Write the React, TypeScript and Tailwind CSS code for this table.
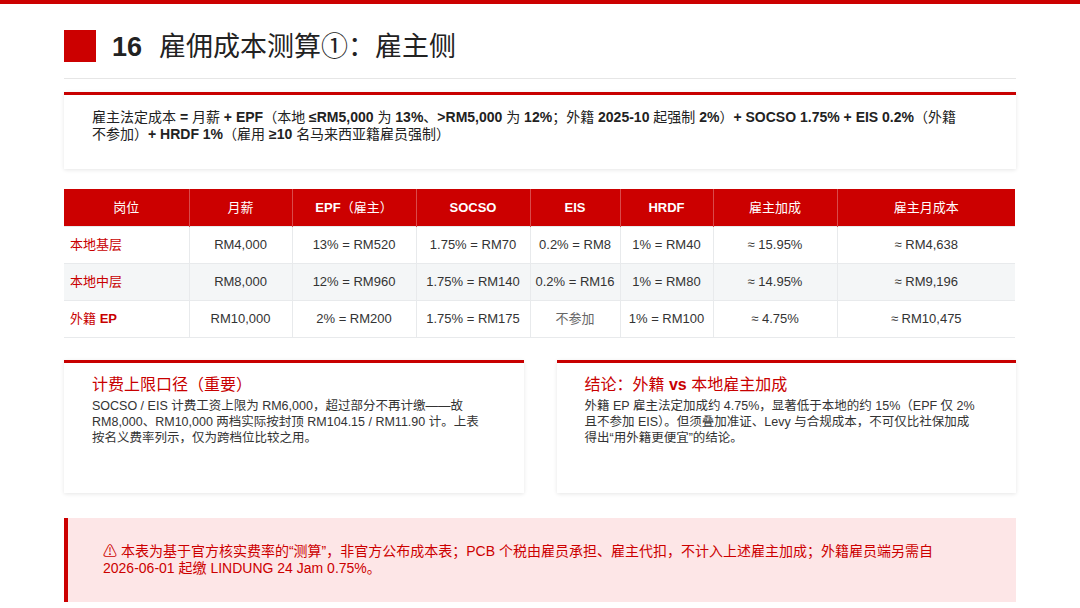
import type { ReactNode } from 'react';

const FONT = "font-['Liberation_Sans','Noto_Sans_CJK_SC',sans-serif]";

// Latin runs keep the weight of the parent, CJK runs are set regular
function Mixed({ text }: { text: string }) {
  const parts = text.split(/([\u3000-\u9fff\uff00-\uffef]+)/);
  return (
    <>
      {parts.map((p, i) =>
        /[\u3000-\u9fff\uff00-\uffef]/.test(p) ? (
          <span key={i} className="font-normal">
            {p}
          </span>
        ) : (
          <span key={i}>{p}</span>
        )
      )}
    </>
  );
}

const widths = ['w-[125px]', 'w-[103px]', 'w-[124px]', 'w-[114px]', 'w-[90px]', 'w-[93px]', 'w-[124px]', 'w-[178px]'];

const headers = ['岗位', '月薪', 'EPF（雇主）', 'SOCSO', 'EIS', 'HRDF', '雇主加成', '雇主月成本'];

const rows = [
  ['本地基层', 'RM4,000', '13% = RM520', '1.75% = RM70', '0.2% = RM8', '1% = RM40', '≈ 15.95%', '≈ RM4,638'],
  ['本地中层', 'RM8,000', '12% = RM960', '1.75% = RM140', '0.2% = RM16', '1% = RM80', '≈ 14.95%', '≈ RM9,196'],
  ['外籍 EP', 'RM10,000', '2% = RM200', '1.75% = RM175', '不参加', '1% = RM100', '≈ 4.75%', '≈ RM10,475'],
];

function Card({ title, children }: { title: string; children: ReactNode }) {
  return (
    <div className="flex-1 h-[133px] bg-white border-t-[3px] border-[#c80000] shadow-[0_1px_4px_rgba(0,0,0,0.10)] pl-7 pr-9 pt-[12px]">
      <div className="text-[16px] font-bold text-[#c80000] leading-[20px]">
        <Mixed text={title} />
      </div>
      <div className="mt-[3px] text-[12.5px] text-[#333] leading-[16px]">{children}</div>
    </div>
  );
}

export default function App() {
  return (
    <div className={`w-[1080px] h-[608px] bg-white overflow-hidden ${FONT}`}>
      <div className="h-1 bg-[#cc0000]" />

      <div className="px-16">
        <div className="flex items-center mt-[26px] h-8">
          <div className="w-8 h-8 bg-[#cc0000]" />
          <h1 className="ml-4 flex items-baseline gap-[17px] text-[27px] text-[#222] mt-[3px]">
            <span className="font-bold">16</span>
            <span>雇佣成本测算①：雇主侧</span>
          </h1>
        </div>
        <div className="mt-[16px] h-px bg-[#e6e6e6]" />

        <div className="mt-[13px] h-[77px] bg-white border-t-[3px] border-[#c80000] shadow-[0_1px_4px_rgba(0,0,0,0.10)] pl-7 pr-12 pt-[14px] text-[14px] leading-[17px] text-[#222] font-bold">
          <Mixed text="雇主法定成本 = 月薪 + EPF（本地 ≤RM5,000 为 13%、>RM5,000 为 12%；外籍 2025-10 起强制 2%）+ SOCSO 1.75% + EIS 0.2%（外籍不参加）+ HRDF 1%（雇用 ≥10 名马来西亚籍雇员强制）" />
        </div>

        <table className="mt-5 border-collapse text-[13px] text-[#333] table-fixed w-[951px]">
          <thead>
            <tr className="bg-[#cc0000] text-white h-[37px]">
              {headers.map((h, i) => (
                <th key={h} className={`${widths[i]} font-bold border-x border-[#d94a4a] first:border-l-0 last:border-r-0`}>
                  <Mixed text={h} />
                </th>
              ))}
            </tr>
          </thead>
          <tbody>
            {rows.map((r, ri) => (
              <tr key={ri} className={`h-[37px] ${ri === 1 ? 'bg-[#f4f6f7]' : 'bg-white'}`}>
                {r.map((c, ci) =>
                  ci === 0 ? (
                    <td key={ci} className="pl-[6px] text-left font-bold text-[#c80000] border border-[#e8eaec] border-l-0">
                      <Mixed text={c} />
                    </td>
                  ) : (
                    <td
                      key={ci}
                      className={`text-center border border-[#e8eaec] last:border-r-0 ${c === '不参加' ? 'text-[#666]' : ''}`}
                    >
                      {c}
                    </td>
                  )
                )}
              </tr>
            ))}
          </tbody>
        </table>

        <div className="mt-[22px] flex gap-[33px]">
          <Card title="计费上限口径（重要）">
            SOCSO / EIS 计费工资上限为 RM6,000，超过部分不再计缴——故 RM8,000、RM10,000 两档实际按封顶 RM104.15 / RM11.90 计。上表按名义费率列示，仅为跨档位比较之用。
          </Card>
          <Card title="结论：外籍 vs 本地雇主加成">
            外籍 EP 雇主法定加成约 4.75%，显著低于本地的约 15%（EPF 仅 2% 且不参加 EIS）。但须叠加准证、Levy 与合规成本，不可仅比社保加成得出“用外籍更便宜”的结论。
          </Card>
        </div>

        <div className="mt-[25px] h-[84px] bg-[#fde6e7] border-l-4 border-[#cc0000] pl-[35px] pr-10 flex items-center text-[14px] leading-[17px] text-[#cc0000]">
          <p>
            ⚠ 本表为基于官方核实费率的“测算”，非官方公布成本表；PCB 个税由雇员承担、雇主代扣，不计入上述雇主加成；外籍雇员端另需自{' '}
            <span className="whitespace-nowrap">2026-06-01</span> 起缴 LINDUNG 24 Jam 0.75%。
          </p>
        </div>
      </div>
    </div>
  );
}
